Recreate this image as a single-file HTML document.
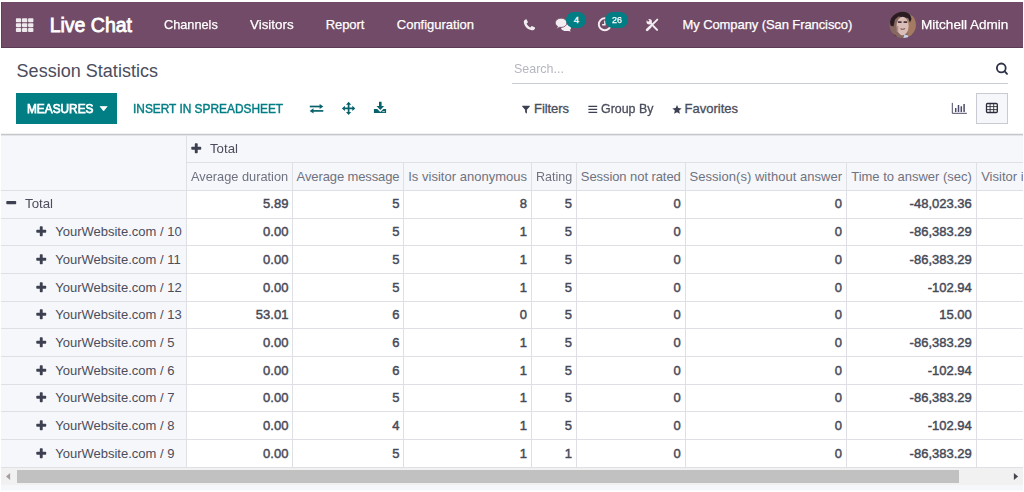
<!DOCTYPE html>
<html><head><meta charset="utf-8"><title>Session Statistics</title>
<style>
html,body{margin:0;padding:0;background:#fff;}
body{width:1024px;height:492px;overflow:hidden;position:relative;font-family:"Liberation Sans",sans-serif;}
.t{position:absolute;white-space:pre;display:block;}
.b{position:absolute;display:block;}
</style></head><body>
<div class="b" style="left:1px;top:2px;width:1022px;height:46px;background:#714b67;border-bottom:1px solid #5b3a53;border-left:1px solid #60405a;box-sizing:border-box;"></div>
<svg class="b" style="left:0;top:0" width="60" height="48"><rect x="15.90" y="18.30" width="5.3" height="4.0" rx="0.8" fill="#efe8ed"/><rect x="22.00" y="18.30" width="5.3" height="4.0" rx="0.8" fill="#efe8ed"/><rect x="28.10" y="18.30" width="5.3" height="4.0" rx="0.8" fill="#efe8ed"/><rect x="15.90" y="23.15" width="5.3" height="4.0" rx="0.8" fill="#efe8ed"/><rect x="22.00" y="23.15" width="5.3" height="4.0" rx="0.8" fill="#efe8ed"/><rect x="28.10" y="23.15" width="5.3" height="4.0" rx="0.8" fill="#efe8ed"/><rect x="15.90" y="28.00" width="5.3" height="4.0" rx="0.8" fill="#efe8ed"/><rect x="22.00" y="28.00" width="5.3" height="4.0" rx="0.8" fill="#efe8ed"/><rect x="28.10" y="28.00" width="5.3" height="4.0" rx="0.8" fill="#efe8ed"/></svg>
<span class="t" style="left:49.70px;top:14.00px;font-size:19.5px;line-height:22px;color:#ffffff;letter-spacing:-0.009px;-webkit-text-stroke:0.8px #ffffff;">Live Chat</span>
<span class="t" style="left:164.00px;top:17.00px;font-size:13px;line-height:15px;color:#ffffff;transform:scaleX(0.9793);transform-origin:0 0;-webkit-text-stroke:0.25px #ffffff;">Channels</span>
<span class="t" style="left:250.00px;top:17.00px;font-size:13px;line-height:15px;color:#ffffff;transform:scaleX(1.0289);transform-origin:0 0;-webkit-text-stroke:0.25px #ffffff;">Visitors</span>
<span class="t" style="left:325.80px;top:17.00px;font-size:13px;line-height:15px;color:#ffffff;letter-spacing:-0.100px;-webkit-text-stroke:0.25px #ffffff;">Report</span>
<span class="t" style="left:396.80px;top:17.00px;font-size:13px;line-height:15px;color:#ffffff;letter-spacing:-0.009px;-webkit-text-stroke:0.25px #ffffff;">Configuration</span>
<span class="t" style="left:682.50px;top:17.00px;font-size:13px;line-height:15px;color:#ffffff;letter-spacing:-0.089px;-webkit-text-stroke:0.25px #ffffff;">My Company (San Francisco)</span>
<span class="t" style="left:920.60px;top:17.00px;font-size:13px;line-height:15px;color:#ffffff;transform:scaleX(1.0428);transform-origin:0 0;-webkit-text-stroke:0.25px #ffffff;">Mitchell Admin</span>
<svg class="b" style="left:520px;top:16px" width="20" height="18" viewBox="520 16 20 18"><path d="M525.6 19.4 c-1.2 0.4 -1.9 1.3 -1.8 2.6 c0.4 4.2 3.6 7.6 8 8.2 c1.5 0.2 2.6 -0.5 3.2 -1.8 c0.2 -0.5 0 -0.9 -0.4 -1.1 l-2.3 -1.1 c-0.4 -0.2 -0.8 -0.1 -1.1 0.3 l-0.8 1 c-1.7 -0.7 -3.1 -2.1 -3.8 -3.9 l1 -0.8 c0.3 -0.3 0.4 -0.7 0.2 -1.1 l-1.1 -2 c-0.2 -0.4 -0.6 -0.5 -1.1 -0.3z" fill="#f3edf1"/></svg>
<svg class="b" style="left:552px;top:14px" width="24" height="20" viewBox="552 14 24 20"><path d="M565.500 24.300 c3 0 5.600 1.500 5.600 3.500 c0 0.900 -0.500 1.700 -1.300 2.300 l1 1.500 l-2.600 -0.700 c-3.400 0.600 -6.600 -0.500 -7.200 -2.400 z" fill="#f3edf1"/><path d="M561.100 18.200 c3.200 0 5.800 2 5.800 4.600 c0 2.600 -2.600 4.600 -5.800 4.600 c-0.500 0 -1 -0.050 -1.500 -0.150 l-3 1.500 l1 -2.400 c-1.400 -0.850 -2.300 -2.100 -2.300 -3.550 c0 -2.600 2.600 -4.600 5.800 -4.600z" fill="#f3edf1" stroke="#714b67" stroke-width="0.800"/></svg>
<svg class="b" style="left:594px;top:14px" width="22" height="20" viewBox="594 14 22 20"><circle cx="604.8" cy="24.3" r="6" fill="none" stroke="#f3edf1" stroke-width="1.9"/><path d="M604.9 20.6 v4.100 h-2.800" fill="none" stroke="#f3edf1" stroke-width="1.500"/></svg>
<svg class="b" style="left:642px;top:15px" width="20" height="20" viewBox="642 15 20 20"><path d="M657.300 19.600 L647.300 29.700" stroke="#f3edf1" stroke-width="1.900" stroke-linecap="round"/><path d="M650.200 26.800 L647.100 29.900" stroke="#f3edf1" stroke-width="2.600" stroke-linecap="round"/><path d="M650.300 22.900 L657.100 29.900" stroke="#f3edf1" stroke-width="2" stroke-linecap="round"/><circle cx="649.200" cy="21.700" r="2.700" fill="#f3edf1"/><rect x="647.900" y="17.600" width="1.900" height="3.600" fill="#714b67" transform="rotate(-45 648.850 21.200)"/></svg>
<svg class="b" style="left:889px;top:11px" width="28" height="28" viewBox="889 11 28 28"><defs><clipPath id="av"><circle cx="902.650" cy="24.900" r="13.150"/></clipPath><filter id="bl" x="-20%" y="-20%" width="140%" height="140%"><feGaussianBlur stdDeviation="0.700"/></filter></defs><g clip-path="url(#av)"><rect x="889" y="11" width="28" height="28" fill="#866861"/><g filter="url(#bl)"><rect x="907.500" y="16" width="10" height="20" fill="#a57a62"/><path d="M890 22 c0.500 -7 4.500 -11 11 -11 c6 0 9.500 2.500 10.500 8 l-1.500 3.500 l-2 -4.500 l-9.500 -1.500 l-3.500 3 l-1.500 7 l-3 -1z" fill="#2a1d24"/><ellipse cx="902.600" cy="26" rx="6" ry="9.300" fill="#d9bdb6"/><path d="M898 22.200 h3.600 M903.600 22.200 h3.600" stroke="#4a343c" stroke-width="1.700"/><path d="M900.500 28.500 q2 1.500 4.500 0" stroke="#8a5d5a" stroke-width="1.100" fill="none"/><path d="M897.500 26 v6" stroke="#b08d84" stroke-width="1.500"/><path d="M903 39 l1.500 -4.500 l3.500 1 l1 3.500z" fill="#c9d3ea"/><path d="M892 33.500 l4.500 2.500 l-0.500 3 h-5z" fill="#2a2228"/></g></g></svg>
<div class="b" style="left:566px;top:11.900px;width:20px;height:16.200px;border-radius:8.100px;background:#017e84"></div>
<div class="b" style="left:605px;top:11.900px;width:23px;height:16.200px;border-radius:8.100px;background:#017e84"></div>
<span class="t" style="left:573.70px;top:13.70px;font-size:9.6px;line-height:11px;color:#ffffff;-webkit-text-stroke:0.3px #ffffff;">4</span>
<span class="t" style="left:611.90px;top:13.70px;font-size:9.6px;line-height:11px;color:#ffffff;transform:scaleX(0.9381);transform-origin:0 0;-webkit-text-stroke:0.25px #ffffff;">26</span>
<span class="t" style="left:16.60px;top:60.50px;font-size:18px;line-height:20px;color:#4a4d5c;letter-spacing:0.020px;">Session Statistics</span>
<span class="t" style="left:513.60px;top:61.00px;font-size:13px;line-height:15px;color:#b4b7c0;transform:scaleX(0.9596);transform-origin:0 0;">Search...</span>
<div class="b" style="left:512px;top:83px;width:496px;height:1px;background:#c9ccd4;"></div>
<div class="b" style="left:16px;top:93px;width:101px;height:31px;background:#017e84;"></div>
<span class="t" style="left:26.60px;top:101.00px;font-size:13px;line-height:15px;color:#ffffff;transform:scaleX(0.9104);transform-origin:0 0;-webkit-text-stroke:0.75px #ffffff;">MEASURES</span>
<svg class="b" style="left:99px;top:105px" width="10" height="8"><path d="M1.100 1.500 L8.100 1.500 L4.600 5.900 Z" fill="#fff" stroke="#fff" stroke-width="0.700" stroke-linejoin="round"/></svg>
<span class="t" style="left:133.40px;top:101.00px;font-size:13px;line-height:15px;color:#017e84;transform:scaleX(0.9139);transform-origin:0 0;-webkit-text-stroke:0.45px #017e84;">INSERT IN SPREADSHEET</span>
<span class="t" style="left:534.00px;top:101.00px;font-size:13px;line-height:15px;color:#4a4d5c;letter-spacing:-0.062px;-webkit-text-stroke:0.3px #4a4d5c;">Filters</span>
<span class="t" style="left:600.80px;top:101.00px;font-size:13px;line-height:15px;color:#4a4d5c;transform:scaleX(0.9538);transform-origin:0 0;-webkit-text-stroke:0.3px #4a4d5c;">Group By</span>
<span class="t" style="left:684.60px;top:101.00px;font-size:13px;line-height:15px;color:#4a4d5c;letter-spacing:-0.005px;-webkit-text-stroke:0.3px #4a4d5c;">Favorites</span>
<svg class="b" style="left:306px;top:100px" width="22" height="18" viewBox="306 100 22 18"><path d="M309.800 106.500 h10.500" stroke="#08626b" stroke-width="1.700"/><path d="M319.600 103.900 L323.400 106.500 L319.600 109.100z" fill="#08626b"/><path d="M323.300 110.900 h-10.500" stroke="#08626b" stroke-width="1.700"/><path d="M313.500 108.300 L309.700 110.900 L313.500 113.500z" fill="#08626b"/></svg>
<svg class="b" style="left:339px;top:99px" width="20" height="20" viewBox="339 99 20 20"><path d="M348.600 103.500 v9.800 M343.700 108.400 h9.800" stroke="#08626b" stroke-width="1.700"/><path d="M348.600 101.700 l2.600 3 h-5.200z M348.600 115.100 l2.600 -3 h-5.200z M341.900 108.400 l3 -2.600 v5.200z M355.300 108.400 l-3 -2.600 v5.200z" fill="#08626b"/></svg>
<svg class="b" style="left:371px;top:99px" width="18" height="18" viewBox="371 99 18 18"><path d="M379 101.800 h2.600 v4.300 h2.500 l-3.800 4 l-3.800 -4 h2.500z" fill="#08626b"/><path d="M373.900 109 h3.300 l3.100 3 l3.100 -3 h2.700 v4.100 h-12.200z" fill="#08626b"/><rect x="382.300" y="111.200" width="2.600" height="0.900" fill="#fff" opacity=".8"/></svg>
<svg class="b" style="left:520px;top:103px" width="12" height="13" viewBox="520 103 12 13"><path d="M522.200 105.700 h7.600 v0.900 l-2.900 3.200 v3.900 l-1.800 -1.400 v-2.500 l-2.900 -3.200z" fill="#3d4052"/></svg>
<svg class="b" style="left:586px;top:103px" width="14" height="12" viewBox="586 103 14 12"><path d="M588.400 106.300 h8.800 M588.400 109.300 h8.800 M588.400 112.300 h8.800" stroke="#3d4052" stroke-width="1.250"/></svg>
<svg class="b" style="left:670px;top:103px" width="14" height="13" viewBox="670 103 14 13"><polygon points="677.00,105.00 678.32,108.08 681.66,108.39 679.14,110.60 679.88,113.86 677.00,112.15 674.12,113.86 674.86,110.60 672.34,108.39 675.68,108.08" fill="#3d4052"/></svg>
<svg class="b" style="left:992px;top:59px" width="20" height="20" viewBox="992 59 20 20"><circle cx="1001.300" cy="67.900" r="4.400" fill="none" stroke="#2e3247" stroke-width="1.800"/><path d="M1004.500 71.200 L1007 73.800" stroke="#2e3247" stroke-width="1.900" stroke-linecap="round"/></svg>
<svg class="b" style="left:949px;top:100px" width="20" height="16" viewBox="949 100 20 16"><path d="M952.300 102.900 v10.400 h14.600" fill="none" stroke="#4a4c6a" stroke-width="1"/><path d="M955.700 108 v3.900 M958.500 104.900 v7 M961.300 106.200 v5.700 M964.100 104 v7.900" stroke="#4a4c6a" stroke-width="1.500"/></svg>
<div class="b" style="left:976px;top:93px;width:32px;height:31px;background:#f6f7fa;border:1px solid #c9cbd2;box-sizing:border-box;"></div>
<svg class="b" style="left:984px;top:101px" width="16" height="14" viewBox="984 101 16 14"><rect x="986.500" y="103.500" width="10.800" height="9" rx="1" fill="#fff" stroke="#2b2d3a" stroke-width="1.300"/><path d="M990.100 103.500 v9 M993.700 103.500 v9 M986.500 106.600 h10.800 M986.500 109.600 h10.800" stroke="#2b2d3a" stroke-width="0.900"/></svg>
<div class="b" style="left:1px;top:135px;width:1022px;height:55px;background:#f6f7fa;"></div>
<div class="b" style="left:1px;top:190px;width:185px;height:277px;background:#f6f7fa;"></div>
<div class="b" style="left:1px;top:485px;width:1022px;height:5px;background:#f6f7fa;"></div>
<div class="b" style="left:1px;top:490px;width:1022px;height:1px;background:#f6f7fa;opacity:.55;"></div>
<div class="b" style="left:1px;top:134px;width:1022px;height:1px;background:#c6c7cd;"></div>
<div class="b" style="left:1px;top:133px;width:1022px;height:1px;background:#c6c7cd;opacity:.25;"></div>
<div class="b" style="left:1px;top:135px;width:1022px;height:1px;background:#c6c7cd;opacity:.4;"></div>
<div class="b" style="left:186px;top:162px;width:837px;height:1px;background:#dee0e6;"></div>
<div class="b" style="left:1px;top:190px;width:1022px;height:1px;background:#dee0e6;"></div>
<div class="b" style="left:1px;top:218px;width:1022px;height:1px;background:#dee0e6;"></div>
<div class="b" style="left:1px;top:245px;width:1022px;height:1px;background:#dee0e6;"></div>
<div class="b" style="left:1px;top:273px;width:1022px;height:1px;background:#dee0e6;"></div>
<div class="b" style="left:1px;top:301px;width:1022px;height:1px;background:#dee0e6;"></div>
<div class="b" style="left:1px;top:328px;width:1022px;height:1px;background:#dee0e6;"></div>
<div class="b" style="left:1px;top:356px;width:1022px;height:1px;background:#dee0e6;"></div>
<div class="b" style="left:1px;top:384px;width:1022px;height:1px;background:#dee0e6;"></div>
<div class="b" style="left:1px;top:411px;width:1022px;height:1px;background:#dee0e6;"></div>
<div class="b" style="left:1px;top:439px;width:1022px;height:1px;background:#dee0e6;"></div>
<div class="b" style="left:1px;top:467px;width:1022px;height:1px;background:#dee0e6;"></div>
<div class="b" style="left:186px;top:136px;width:1px;height:331px;background:#dee0e6;"></div>
<div class="b" style="left:292px;top:162px;width:1px;height:305px;background:#dee0e6;"></div>
<div class="b" style="left:403px;top:162px;width:1px;height:305px;background:#dee0e6;"></div>
<div class="b" style="left:531px;top:162px;width:1px;height:305px;background:#dee0e6;"></div>
<div class="b" style="left:576px;top:162px;width:1px;height:305px;background:#dee0e6;"></div>
<div class="b" style="left:685px;top:162px;width:1px;height:305px;background:#dee0e6;"></div>
<div class="b" style="left:846px;top:162px;width:1px;height:305px;background:#dee0e6;"></div>
<div class="b" style="left:976px;top:162px;width:1px;height:305px;background:#dee0e6;"></div>
<svg class="b" style="left:191px;top:142.700px" width="11" height="11"><rect x="0.3" y="3.8" width="9.900" height="2.900" rx="0.700" fill="#3d4050"/><rect x="3.800" y="0.300" width="2.900" height="9.900" rx="0.700" fill="#3d4050"/></svg>
<span class="t" style="left:209.50px;top:141.00px;font-size:13px;line-height:15px;color:#4a4d5c;transform:scaleX(1.0169);transform-origin:0 0;">Total</span>
<span class="t" style="left:191.20px;top:169.25px;font-size:13px;line-height:15px;color:#6f7280;transform:scaleX(0.9837);transform-origin:0 0;">Average duration</span>
<span class="t" style="left:296.60px;top:169.25px;font-size:13px;line-height:15px;color:#6f7280;letter-spacing:-0.112px;">Average message</span>
<span class="t" style="left:408.20px;top:169.25px;font-size:13px;line-height:15px;color:#6f7280;letter-spacing:0.016px;">Is visitor anonymous</span>
<span class="t" style="left:535.80px;top:169.25px;font-size:13px;line-height:15px;color:#6f7280;transform:scaleX(0.9637);transform-origin:0 0;">Rating</span>
<span class="t" style="left:580.80px;top:169.25px;font-size:13px;line-height:15px;color:#6f7280;letter-spacing:-0.074px;">Session not rated</span>
<span class="t" style="left:689.60px;top:169.25px;font-size:13px;line-height:15px;color:#6f7280;letter-spacing:0.027px;">Session(s) without answer</span>
<span class="t" style="left:851.20px;top:169.25px;font-size:13px;line-height:15px;color:#6f7280;letter-spacing:-0.014px;">Time to answer (sec)</span>
<span class="t" style="left:981.20px;top:169.25px;font-size:13px;line-height:15px;color:#6f7280;">Visitor id</span>
<svg class="b" style="left:6px;top:200.00px" width="11" height="5"><rect x="0.300" y="0.900" width="9.900" height="3.300" rx="0.800" fill="#3d4050"/></svg>
<span class="t" style="left:25.00px;top:196.00px;font-size:13px;line-height:15px;color:#4a4d5c;transform:scaleX(1.0205);transform-origin:0 0;">Total</span>
<span class="t" style="left:263.09px;top:196.00px;font-size:13px;line-height:15px;color:#464957;-webkit-text-stroke:0.45px #464957;">5.89</span>
<span class="t" style="left:392.35px;top:196.00px;font-size:13px;line-height:15px;color:#464957;-webkit-text-stroke:0.45px #464957;">5</span>
<span class="t" style="left:519.75px;top:196.00px;font-size:13px;line-height:15px;color:#464957;-webkit-text-stroke:0.45px #464957;">8</span>
<span class="t" style="left:564.75px;top:196.00px;font-size:13px;line-height:15px;color:#464957;-webkit-text-stroke:0.45px #464957;">5</span>
<span class="t" style="left:673.55px;top:196.00px;font-size:13px;line-height:15px;color:#464957;-webkit-text-stroke:0.45px #464957;">0</span>
<span class="t" style="left:834.75px;top:196.00px;font-size:13px;line-height:15px;color:#464957;-webkit-text-stroke:0.45px #464957;">0</span>
<span class="t" style="left:909.61px;top:196.00px;font-size:13px;line-height:15px;color:#464957;-webkit-text-stroke:0.45px #464957;">-48,023.36</span>
<svg class="b" style="left:36px;top:226.00px" width="11" height="11"><rect x="0.3" y="3.8" width="9.900" height="2.900" rx="0.700" fill="#3d4050"/><rect x="3.800" y="0.300" width="2.900" height="9.900" rx="0.700" fill="#3d4050"/></svg>
<span class="t" style="left:55.20px;top:224.00px;font-size:13px;line-height:15px;color:#4a4d5c;">YourWebsite.com / 10</span>
<span class="t" style="left:263.09px;top:224.00px;font-size:13px;line-height:15px;color:#464957;-webkit-text-stroke:0.45px #464957;">0.00</span>
<span class="t" style="left:392.35px;top:224.00px;font-size:13px;line-height:15px;color:#464957;-webkit-text-stroke:0.45px #464957;">5</span>
<span class="t" style="left:519.75px;top:224.00px;font-size:13px;line-height:15px;color:#464957;-webkit-text-stroke:0.45px #464957;">1</span>
<span class="t" style="left:564.75px;top:224.00px;font-size:13px;line-height:15px;color:#464957;-webkit-text-stroke:0.45px #464957;">5</span>
<span class="t" style="left:673.55px;top:224.00px;font-size:13px;line-height:15px;color:#464957;-webkit-text-stroke:0.45px #464957;">0</span>
<span class="t" style="left:834.75px;top:224.00px;font-size:13px;line-height:15px;color:#464957;-webkit-text-stroke:0.45px #464957;">0</span>
<span class="t" style="left:909.61px;top:224.00px;font-size:13px;line-height:15px;color:#464957;-webkit-text-stroke:0.45px #464957;">-86,383.29</span>
<svg class="b" style="left:36px;top:254.00px" width="11" height="11"><rect x="0.3" y="3.8" width="9.900" height="2.900" rx="0.700" fill="#3d4050"/><rect x="3.800" y="0.300" width="2.900" height="9.900" rx="0.700" fill="#3d4050"/></svg>
<span class="t" style="left:55.20px;top:252.00px;font-size:13px;line-height:15px;color:#4a4d5c;">YourWebsite.com / 11</span>
<span class="t" style="left:263.09px;top:252.00px;font-size:13px;line-height:15px;color:#464957;-webkit-text-stroke:0.45px #464957;">0.00</span>
<span class="t" style="left:392.35px;top:252.00px;font-size:13px;line-height:15px;color:#464957;-webkit-text-stroke:0.45px #464957;">5</span>
<span class="t" style="left:519.75px;top:252.00px;font-size:13px;line-height:15px;color:#464957;-webkit-text-stroke:0.45px #464957;">1</span>
<span class="t" style="left:564.75px;top:252.00px;font-size:13px;line-height:15px;color:#464957;-webkit-text-stroke:0.45px #464957;">5</span>
<span class="t" style="left:673.55px;top:252.00px;font-size:13px;line-height:15px;color:#464957;-webkit-text-stroke:0.45px #464957;">0</span>
<span class="t" style="left:834.75px;top:252.00px;font-size:13px;line-height:15px;color:#464957;-webkit-text-stroke:0.45px #464957;">0</span>
<span class="t" style="left:909.61px;top:252.00px;font-size:13px;line-height:15px;color:#464957;-webkit-text-stroke:0.45px #464957;">-86,383.29</span>
<svg class="b" style="left:36px;top:282.00px" width="11" height="11"><rect x="0.3" y="3.8" width="9.900" height="2.900" rx="0.700" fill="#3d4050"/><rect x="3.800" y="0.300" width="2.900" height="9.900" rx="0.700" fill="#3d4050"/></svg>
<span class="t" style="left:55.20px;top:280.00px;font-size:13px;line-height:15px;color:#4a4d5c;">YourWebsite.com / 12</span>
<span class="t" style="left:263.09px;top:280.00px;font-size:13px;line-height:15px;color:#464957;-webkit-text-stroke:0.45px #464957;">0.00</span>
<span class="t" style="left:392.35px;top:280.00px;font-size:13px;line-height:15px;color:#464957;-webkit-text-stroke:0.45px #464957;">5</span>
<span class="t" style="left:519.75px;top:280.00px;font-size:13px;line-height:15px;color:#464957;-webkit-text-stroke:0.45px #464957;">1</span>
<span class="t" style="left:564.75px;top:280.00px;font-size:13px;line-height:15px;color:#464957;-webkit-text-stroke:0.45px #464957;">5</span>
<span class="t" style="left:673.55px;top:280.00px;font-size:13px;line-height:15px;color:#464957;-webkit-text-stroke:0.45px #464957;">0</span>
<span class="t" style="left:834.75px;top:280.00px;font-size:13px;line-height:15px;color:#464957;-webkit-text-stroke:0.45px #464957;">0</span>
<span class="t" style="left:927.67px;top:280.00px;font-size:13px;line-height:15px;color:#464957;-webkit-text-stroke:0.45px #464957;">-102.94</span>
<svg class="b" style="left:36px;top:309.00px" width="11" height="11"><rect x="0.3" y="3.8" width="9.900" height="2.900" rx="0.700" fill="#3d4050"/><rect x="3.800" y="0.300" width="2.900" height="9.900" rx="0.700" fill="#3d4050"/></svg>
<span class="t" style="left:55.20px;top:307.00px;font-size:13px;line-height:15px;color:#4a4d5c;">YourWebsite.com / 13</span>
<span class="t" style="left:255.84px;top:307.00px;font-size:13px;line-height:15px;color:#464957;-webkit-text-stroke:0.45px #464957;">53.01</span>
<span class="t" style="left:392.35px;top:307.00px;font-size:13px;line-height:15px;color:#464957;-webkit-text-stroke:0.45px #464957;">6</span>
<span class="t" style="left:519.75px;top:307.00px;font-size:13px;line-height:15px;color:#464957;-webkit-text-stroke:0.45px #464957;">0</span>
<span class="t" style="left:564.75px;top:307.00px;font-size:13px;line-height:15px;color:#464957;-webkit-text-stroke:0.45px #464957;">5</span>
<span class="t" style="left:673.55px;top:307.00px;font-size:13px;line-height:15px;color:#464957;-webkit-text-stroke:0.45px #464957;">0</span>
<span class="t" style="left:834.75px;top:307.00px;font-size:13px;line-height:15px;color:#464957;-webkit-text-stroke:0.45px #464957;">0</span>
<span class="t" style="left:939.24px;top:307.00px;font-size:13px;line-height:15px;color:#464957;-webkit-text-stroke:0.45px #464957;">15.00</span>
<svg class="b" style="left:36px;top:337.00px" width="11" height="11"><rect x="0.3" y="3.8" width="9.900" height="2.900" rx="0.700" fill="#3d4050"/><rect x="3.800" y="0.300" width="2.900" height="9.900" rx="0.700" fill="#3d4050"/></svg>
<span class="t" style="left:55.20px;top:335.00px;font-size:13px;line-height:15px;color:#4a4d5c;">YourWebsite.com / 5</span>
<span class="t" style="left:263.09px;top:335.00px;font-size:13px;line-height:15px;color:#464957;-webkit-text-stroke:0.45px #464957;">0.00</span>
<span class="t" style="left:392.35px;top:335.00px;font-size:13px;line-height:15px;color:#464957;-webkit-text-stroke:0.45px #464957;">6</span>
<span class="t" style="left:519.75px;top:335.00px;font-size:13px;line-height:15px;color:#464957;-webkit-text-stroke:0.45px #464957;">1</span>
<span class="t" style="left:564.75px;top:335.00px;font-size:13px;line-height:15px;color:#464957;-webkit-text-stroke:0.45px #464957;">5</span>
<span class="t" style="left:673.55px;top:335.00px;font-size:13px;line-height:15px;color:#464957;-webkit-text-stroke:0.45px #464957;">0</span>
<span class="t" style="left:834.75px;top:335.00px;font-size:13px;line-height:15px;color:#464957;-webkit-text-stroke:0.45px #464957;">0</span>
<span class="t" style="left:909.61px;top:335.00px;font-size:13px;line-height:15px;color:#464957;-webkit-text-stroke:0.45px #464957;">-86,383.29</span>
<svg class="b" style="left:36px;top:365.00px" width="11" height="11"><rect x="0.3" y="3.8" width="9.900" height="2.900" rx="0.700" fill="#3d4050"/><rect x="3.800" y="0.300" width="2.900" height="9.900" rx="0.700" fill="#3d4050"/></svg>
<span class="t" style="left:55.20px;top:363.00px;font-size:13px;line-height:15px;color:#4a4d5c;">YourWebsite.com / 6</span>
<span class="t" style="left:263.09px;top:363.00px;font-size:13px;line-height:15px;color:#464957;-webkit-text-stroke:0.45px #464957;">0.00</span>
<span class="t" style="left:392.35px;top:363.00px;font-size:13px;line-height:15px;color:#464957;-webkit-text-stroke:0.45px #464957;">6</span>
<span class="t" style="left:519.75px;top:363.00px;font-size:13px;line-height:15px;color:#464957;-webkit-text-stroke:0.45px #464957;">1</span>
<span class="t" style="left:564.75px;top:363.00px;font-size:13px;line-height:15px;color:#464957;-webkit-text-stroke:0.45px #464957;">5</span>
<span class="t" style="left:673.55px;top:363.00px;font-size:13px;line-height:15px;color:#464957;-webkit-text-stroke:0.45px #464957;">0</span>
<span class="t" style="left:834.75px;top:363.00px;font-size:13px;line-height:15px;color:#464957;-webkit-text-stroke:0.45px #464957;">0</span>
<span class="t" style="left:927.67px;top:363.00px;font-size:13px;line-height:15px;color:#464957;-webkit-text-stroke:0.45px #464957;">-102.94</span>
<svg class="b" style="left:36px;top:392.00px" width="11" height="11"><rect x="0.3" y="3.8" width="9.900" height="2.900" rx="0.700" fill="#3d4050"/><rect x="3.800" y="0.300" width="2.900" height="9.900" rx="0.700" fill="#3d4050"/></svg>
<span class="t" style="left:55.20px;top:390.00px;font-size:13px;line-height:15px;color:#4a4d5c;">YourWebsite.com / 7</span>
<span class="t" style="left:263.09px;top:390.00px;font-size:13px;line-height:15px;color:#464957;-webkit-text-stroke:0.45px #464957;">0.00</span>
<span class="t" style="left:392.35px;top:390.00px;font-size:13px;line-height:15px;color:#464957;-webkit-text-stroke:0.45px #464957;">5</span>
<span class="t" style="left:519.75px;top:390.00px;font-size:13px;line-height:15px;color:#464957;-webkit-text-stroke:0.45px #464957;">1</span>
<span class="t" style="left:564.75px;top:390.00px;font-size:13px;line-height:15px;color:#464957;-webkit-text-stroke:0.45px #464957;">5</span>
<span class="t" style="left:673.55px;top:390.00px;font-size:13px;line-height:15px;color:#464957;-webkit-text-stroke:0.45px #464957;">0</span>
<span class="t" style="left:834.75px;top:390.00px;font-size:13px;line-height:15px;color:#464957;-webkit-text-stroke:0.45px #464957;">0</span>
<span class="t" style="left:909.61px;top:390.00px;font-size:13px;line-height:15px;color:#464957;-webkit-text-stroke:0.45px #464957;">-86,383.29</span>
<svg class="b" style="left:36px;top:420.00px" width="11" height="11"><rect x="0.3" y="3.8" width="9.900" height="2.900" rx="0.700" fill="#3d4050"/><rect x="3.800" y="0.300" width="2.900" height="9.900" rx="0.700" fill="#3d4050"/></svg>
<span class="t" style="left:55.20px;top:418.00px;font-size:13px;line-height:15px;color:#4a4d5c;">YourWebsite.com / 8</span>
<span class="t" style="left:263.09px;top:418.00px;font-size:13px;line-height:15px;color:#464957;-webkit-text-stroke:0.45px #464957;">0.00</span>
<span class="t" style="left:392.35px;top:418.00px;font-size:13px;line-height:15px;color:#464957;-webkit-text-stroke:0.45px #464957;">4</span>
<span class="t" style="left:519.75px;top:418.00px;font-size:13px;line-height:15px;color:#464957;-webkit-text-stroke:0.45px #464957;">1</span>
<span class="t" style="left:564.75px;top:418.00px;font-size:13px;line-height:15px;color:#464957;-webkit-text-stroke:0.45px #464957;">5</span>
<span class="t" style="left:673.55px;top:418.00px;font-size:13px;line-height:15px;color:#464957;-webkit-text-stroke:0.45px #464957;">0</span>
<span class="t" style="left:834.75px;top:418.00px;font-size:13px;line-height:15px;color:#464957;-webkit-text-stroke:0.45px #464957;">0</span>
<span class="t" style="left:927.67px;top:418.00px;font-size:13px;line-height:15px;color:#464957;-webkit-text-stroke:0.45px #464957;">-102.94</span>
<svg class="b" style="left:36px;top:448.00px" width="11" height="11"><rect x="0.3" y="3.8" width="9.900" height="2.900" rx="0.700" fill="#3d4050"/><rect x="3.800" y="0.300" width="2.900" height="9.900" rx="0.700" fill="#3d4050"/></svg>
<span class="t" style="left:55.20px;top:446.00px;font-size:13px;line-height:15px;color:#4a4d5c;">YourWebsite.com / 9</span>
<span class="t" style="left:263.09px;top:446.00px;font-size:13px;line-height:15px;color:#464957;-webkit-text-stroke:0.45px #464957;">0.00</span>
<span class="t" style="left:392.35px;top:446.00px;font-size:13px;line-height:15px;color:#464957;-webkit-text-stroke:0.45px #464957;">5</span>
<span class="t" style="left:519.75px;top:446.00px;font-size:13px;line-height:15px;color:#464957;-webkit-text-stroke:0.45px #464957;">1</span>
<span class="t" style="left:564.75px;top:446.00px;font-size:13px;line-height:15px;color:#464957;-webkit-text-stroke:0.45px #464957;">1</span>
<span class="t" style="left:673.55px;top:446.00px;font-size:13px;line-height:15px;color:#464957;-webkit-text-stroke:0.45px #464957;">0</span>
<span class="t" style="left:834.75px;top:446.00px;font-size:13px;line-height:15px;color:#464957;-webkit-text-stroke:0.45px #464957;">0</span>
<span class="t" style="left:909.61px;top:446.00px;font-size:13px;line-height:15px;color:#464957;-webkit-text-stroke:0.45px #464957;">-86,383.29</span>
<div class="b" style="left:1px;top:468px;width:1022px;height:17px;background:#f1f1f1;"></div>
<div class="b" style="left:17px;top:470px;width:942px;height:13px;background:#c1c1c1;"></div>
<svg class="b" style="left:5px;top:472px" width="7" height="9"><path d="M5.1 1 L1 4.500 L5.1 8 Z" fill="#a89ca2"/></svg>
<svg class="b" style="left:1012px;top:472px" width="7" height="9"><path d="M1.900 0.900 L6.100 4.500 L1.900 8.100 Z" fill="#45454f"/></svg>
<div class="b" style="left:1023px;top:0px;width:1px;height:492px;background:#fff;"></div>
</body></html>
